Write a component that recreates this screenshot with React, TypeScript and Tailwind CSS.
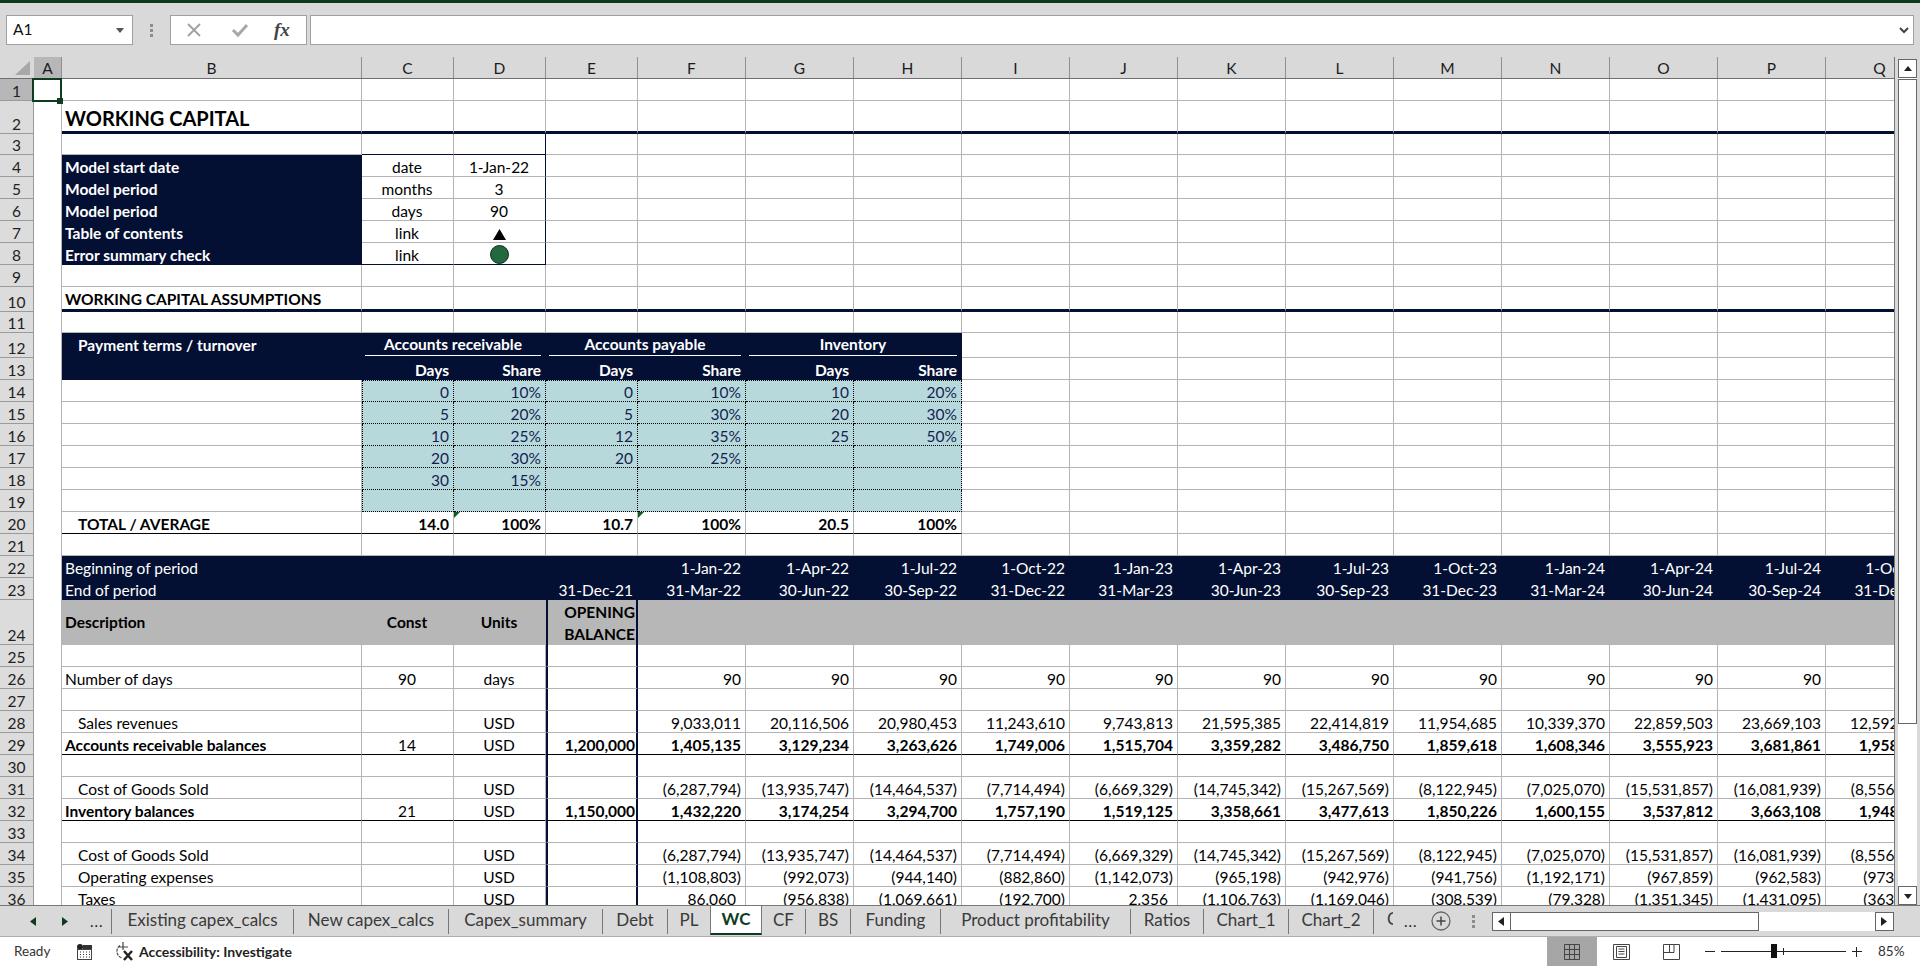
import clsx from "clsx";
import type { ReactNode } from "react";
import { twMerge } from "tailwind-merge";

type Spec = { t?: ReactNode; a?: "l" | "r" | "c"; b?: string; c?: string };
type Cells = Record<string, Spec | null>;

const COLS = "ABCDEFGHIJKLMNOPQ".split("");
const PERIOD_COLS = "FGHIJKLMNOPQ".split("");
const GRID_COLS = "grid grid-cols-[34px_28px_300px_92px_92px_92px_repeat(12,108px)]";

const GRID = "border-r border-b border-[#b4b4b4]";
const NO_LINE = "border-r border-b border-transparent";
const THICK = "border-r border-b-[3px] border-r-[#b4b4b4] border-b-[#031033]";
const BLACK = "border-r border-b border-r-[#b4b4b4] border-b-black";
const OPENING = "border-x-2 border-b border-x-[#031033] border-b-[#b4b4b4]";
const OPENING_BLACK = "border-x-2 border-b border-x-[#031033] border-b-black";
const INDENT = "pl-[16px]";

const NAVY = { b: NO_LINE, c: "bg-[#031033] text-white" };
const GREY = { b: NO_LINE, c: "bg-[#b7b7b7] font-bold items-center" };

const ALIGN = { l: "justify-start", r: "justify-end", c: "justify-center" };

function fill(cols: string, spec: Spec): Cells {
  return Object.fromEntries(cols.split("").map((col) => [col, spec]));
}

function periods(values: string[], c?: string): Cells {
  return Object.fromEntries(values.map((t, i) => [PERIOD_COLS[i], { t, a: "r" as const, c }]));
}

function Row({ n, h = "h-[22px]", cells = {}, active }: { n: number; h?: string; cells?: Cells; active?: boolean }) {
  return (
    <div className={clsx(GRID_COLS, h)}>
      <div
        className={clsx(
          "flex items-end justify-center border-r border-b border-[#9a9a9a] leading-[17px] text-[#222]",
          active ? "bg-[#b7b7b7]" : "bg-[#dcdcdc]",
        )}
      >
        {n}
      </div>
      {COLS.map((col) => {
        const spec = cells[col];
        if (spec === null) return null;
        return (
          <div
            key={col}
            className={twMerge(
              "relative flex items-end whitespace-nowrap pl-[3px] pr-[4px] leading-[17px] text-black",
              ALIGN[spec?.a ?? "l"],
              spec?.b ?? (col === "A" ? "border-r border-[#b4b4b4]" : GRID),
              spec?.c,
            )}
          >
            {spec?.t}
          </div>
        );
      })}
    </div>
  );
}

function Triangle() {
  return <span className="absolute top-0 left-0 h-[6px] w-[6px] bg-[#0f5a1e] [clip-path:polygon(0_0,100%_0,0_100%)]" />;
}

function GroupHead({ label }: { label: string }) {
  return <span className="mb-[1px] w-full border-b border-white pb-[2px] text-center font-bold">{label}</span>;
}

const info = (label: string, unit: string, value: ReactNode, last?: boolean): Cells => ({
  B: { ...NAVY, t: label, c: "bg-[#031033] text-white font-bold" },
  C: { t: unit, a: "c", b: last ? "border-r border-b border-r-[#b4b4b4] border-b-[#031033]" : GRID },
  D: {
    t: value,
    a: "c",
    b: last ? "border-r border-b border-[#031033]" : "border-r border-b border-r-[#031033] border-b-[#b4b4b4]",
  },
});

// dotted input block: the first row also draws the top edge, column C the left edge
const inputRow = (values: string[], first?: boolean): Cells =>
  Object.fromEntries(
    "CDEFGH".split("").map((col, i) => [
      col,
      {
        t: values[i],
        a: "r" as const,
        b: clsx("border-r border-b border-dotted border-black", first && "border-t", col === "C" && "border-l"),
        c: "bg-[#b8d9db] text-[#141f52]",
      },
    ]),
  );

const dateEnds = ["31-Mar-22", "30-Jun-22", "30-Sep-22", "31-Dec-22", "31-Mar-23", "30-Jun-23", "30-Sep-23", "31-Dec-23", "31-Mar-24", "30-Jun-24", "30-Sep-24", "31-Dec-24"];
const dateStarts = ["1-Jan-22", "1-Apr-22", "1-Jul-22", "1-Oct-22", "1-Jan-23", "1-Apr-23", "1-Jul-23", "1-Oct-23", "1-Jan-24", "1-Apr-24", "1-Jul-24", "1-Oct-24"];
const cogs = ["(6,287,794)", "(13,935,747)", "(14,464,537)", "(7,714,494)", "(6,669,329)", "(14,745,342)", "(15,267,569)", "(8,122,945)", "(7,025,070)", "(15,531,857)", "(16,081,939)", "(8,556,204)"];
const sales = ["9,033,011", "20,116,506", "20,980,453", "11,243,610", "9,743,813", "21,595,385", "22,414,819", "11,954,685", "10,339,370", "22,859,503", "23,669,103", "12,592,418"];
const receivables = ["1,405,135", "3,129,234", "3,263,626", "1,749,006", "1,515,704", "3,359,282", "3,486,750", "1,859,618", "1,608,346", "3,555,923", "3,681,861", "1,958,820"];
const inventory = ["1,432,220", "3,174,254", "3,294,700", "1,757,190", "1,519,125", "3,358,661", "3,477,613", "1,850,226", "1,600,155", "3,537,812", "3,663,108", "1,948,080"];
const opex = ["(1,108,803)", "(992,073)", "(944,140)", "(882,860)", "(1,142,073)", "(965,198)", "(942,976)", "(941,756)", "(1,192,171)", "(967,859)", "(962,583)", "(973,210)"];
const taxes = ["86,060", "(956,838)", "(1,069,661)", "(192,700)", "2,356", "(1,106,763)", "(1,169,046)", "(308,539)", "(79,328)", "(1,351,345)", "(1,431,095)", "(363,402)"];

const opening = (t?: string, line = OPENING): Spec => ({ t, a: "r", b: line, c: clsx("pr-[1px]", t && "font-bold") });
const blackRow = (cells: Cells): Cells => {
  const out: Cells = {};
  "BCDFGHIJKLMNOPQ".split("").forEach((col) => {
    out[col] = { ...cells[col], b: BLACK };
  });
  return out;
};

function Sheet() {
  return (
    <div className="w-[1895px] overflow-hidden border-r border-[#777] bg-white">
      <div className={clsx(GRID_COLS, "h-[22px] border-b border-[#6f6f6f] bg-[#d9d9d9]")}>
        <div className="flex items-end justify-end pr-[4px] pb-[3px]">
          <span className="h-[14px] w-[15px] bg-[#a8a8a8] [clip-path:polygon(100%_0,100%_100%,0_100%)]" />
        </div>
        {COLS.map((col) => (
          <div
            key={col}
            className={clsx(
              "flex items-end justify-center border-r border-[#909090] leading-[19px] text-[#1c1c1c]",
              col === "A" && "bg-[#b7b7b7]",
            )}
          >
            {col}
          </div>
        ))}
      </div>

      <Row
        n={1}
        active
        cells={{
          A: {
            t: (
              <span className="absolute -top-[1px] -right-[1px] -bottom-[1px] -left-[2px] z-10 border-2 border-[#0d3d1e]">
                <span className="absolute -right-[3px] -bottom-[4px] h-[6px] w-[6px] bg-[#0d3d1e]" />
              </span>
            ),
          },
        }}
      />
      <Row
        n={2}
        h="h-[33px]"
        cells={{
          ...fill("BCDEFGHIJKLMNOPQ", { b: THICK }),
          B: { t: "WORKING CAPITAL", b: THICK, c: "pb-[2px] text-[20px] font-bold leading-[22px]" },
        }}
      />
      <Row n={3} h="h-[21px]" cells={{ C: { b: "border-r border-b border-r-[#b4b4b4] border-b-[#031033]" }, D: { b: "border-r border-b border-[#031033]" } }} />
      <Row n={4} cells={info("Model start date", "date", "1-Jan-22")} />
      <Row n={5} cells={info("Model period", "months", "3")} />
      <Row n={6} cells={info("Model period", "days", "90")} />
      <Row
        n={7}
        cells={info(
          "Table of contents",
          "link",
          <svg width="13" height="11" viewBox="0 0 13 11" className="mb-[2px]">
            <polygon points="6.5,0 13,11 0,11" fill="#000" />
          </svg>,
        )}
      />
      <Row
        n={8}
        cells={info(
          "Error summary check",
          "link",
          <span className="h-[19px] w-[19px] rounded-full border border-[#0b2a18] bg-[#22693f]" />,
          true,
        )}
      />
      <Row n={9} />
      <Row
        n={10}
        h="h-[25px]"
        cells={{
          ...fill("BCDEFGHIJKLMNOPQ", { b: THICK }),
          B: { t: "WORKING CAPITAL ASSUMPTIONS", b: THICK, c: "pb-[1px] font-bold" },
        }}
      />
      <Row n={11} h="h-[21px]" />
      <Row
        n={12}
        h="h-[25px]"
        cells={{
          ...fill("BCDEFGH", NAVY),
          B: { ...NAVY, t: "Payment terms / turnover", c: "bg-[#031033] text-white font-bold pl-[16px] pb-[3px]" },
          C: { ...NAVY, t: <GroupHead label="Accounts receivable" />, c: "bg-[#031033] text-white col-span-2" },
          D: null,
          E: { ...NAVY, t: <GroupHead label="Accounts payable" />, c: "bg-[#031033] text-white col-span-2" },
          F: null,
          G: { ...NAVY, t: <GroupHead label="Inventory" />, c: "bg-[#031033] text-white col-span-2" },
          H: null,
        }}
      />
      <Row
        n={13}
        cells={{
          B: NAVY,
          ...Object.fromEntries(
            "CDEFGH".split("").map((col, i) => [
              col,
              { ...NAVY, t: i % 2 ? "Share" : "Days", a: "r" as const, c: "bg-[#031033] text-white font-bold" },
            ]),
          ),
        }}
      />
      <Row n={14} cells={inputRow(["0", "10%", "0", "10%", "10", "20%"], true)} />
      <Row n={15} cells={inputRow(["5", "20%", "5", "30%", "20", "30%"])} />
      <Row n={16} cells={inputRow(["10", "25%", "12", "35%", "25", "50%"])} />
      <Row n={17} cells={inputRow(["20", "30%", "20", "25%", "", ""])} />
      <Row n={18} cells={inputRow(["30", "15%", "", "", "", ""])} />
      <Row n={19} cells={inputRow(["", "", "", "", "", ""])} />
      <Row
        n={20}
        cells={{
          B: { t: "TOTAL / AVERAGE", b: BLACK, c: `font-bold ${INDENT}` },
          C: { t: "14.0", a: "r", b: BLACK, c: "font-bold" },
          D: { t: <><Triangle />100%</>, a: "r", b: BLACK, c: "font-bold" },
          E: { t: "10.7", a: "r", b: BLACK, c: "font-bold" },
          F: { t: <><Triangle />100%</>, a: "r", b: BLACK, c: "font-bold" },
          G: { t: "20.5", a: "r", b: BLACK, c: "font-bold" },
          H: { t: "100%", a: "r", b: BLACK, c: "font-bold" },
        }}
      />
      <Row n={21} />
      <Row
        n={22}
        cells={{
          ...fill("BCDE", NAVY),
          B: { ...NAVY, t: "Beginning of period" },
          ...Object.fromEntries(dateStarts.map((t, i) => [PERIOD_COLS[i], { ...NAVY, t, a: "r" as const }])),
        }}
      />
      <Row
        n={23}
        cells={{
          ...fill("BCD", NAVY),
          B: { ...NAVY, t: "End of period" },
          E: { ...NAVY, t: "31-Dec-21", a: "r" },
          ...Object.fromEntries(dateEnds.map((t, i) => [PERIOD_COLS[i], { ...NAVY, t, a: "r" as const }])),
        }}
      />
      <Row
        n={24}
        h="h-[45px]"
        cells={{
          ...fill("BCDFGHIJKLMNOPQ", GREY),
          B: { ...GREY, t: "Description" },
          C: { ...GREY, t: "Const", a: "c" },
          D: { ...GREY, t: "Units", a: "c" },
          E: {
            t: (
              <span className="text-right leading-[22px]">
                OPENING
                <br />
                BALANCE
              </span>
            ),
            a: "r",
            b: "border-x-2 border-x-[#031033]",
            c: "bg-[#b7b7b7] pr-[1px] font-bold",
          },
        }}
      />
      <Row n={25} cells={{ E: opening() }} />
      <Row
        n={26}
        cells={{
          B: { t: "Number of days" },
          C: { t: "90", a: "c" },
          D: { t: "days", a: "c" },
          E: opening(),
          ...periods(Array(12).fill("90")),
        }}
      />
      <Row n={27} cells={{ E: opening() }} />
      <Row n={28} cells={{ B: { t: "Sales revenues", c: INDENT }, D: { t: "USD", a: "c" }, E: opening(), ...periods(sales) }} />
      <Row
        n={29}
        cells={{
          ...blackRow({
            B: { t: "Accounts receivable balances", c: "font-bold" },
            C: { t: "14", a: "c" },
            D: { t: "USD", a: "c" },
            ...periods(receivables, "font-bold"),
          }),
          E: opening("1,200,000", OPENING_BLACK),
        }}
      />
      <Row n={30} cells={{ E: opening() }} />
      <Row n={31} cells={{ B: { t: "Cost of Goods Sold", c: INDENT }, D: { t: "USD", a: "c" }, E: opening(), ...periods(cogs) }} />
      <Row
        n={32}
        cells={{
          ...blackRow({
            B: { t: "Inventory balances", c: "font-bold" },
            C: { t: "21", a: "c" },
            D: { t: "USD", a: "c" },
            ...periods(inventory, "font-bold"),
          }),
          E: opening("1,150,000", OPENING_BLACK),
        }}
      />
      <Row n={33} cells={{ E: opening() }} />
      <Row n={34} cells={{ B: { t: "Cost of Goods Sold", c: INDENT }, D: { t: "USD", a: "c" }, E: opening(), ...periods(cogs) }} />
      <Row n={35} cells={{ B: { t: "Operating expenses", c: INDENT }, D: { t: "USD", a: "c" }, E: opening(), ...periods(opex) }} />
      <Row
        n={36}
        cells={{
          B: { t: "Taxes", c: INDENT },
          D: { t: "USD", a: "c" },
          E: opening(),
          ...Object.fromEntries(
            taxes.map((t, i) => [PERIOD_COLS[i], { t, a: "r" as const, c: t.startsWith("(") ? undefined : "pr-[9px]" }]),
          ),
        }}
      />
    </div>
  );
}

function ScrollArrow({ d, size = 8 }: { d: string; size?: number }) {
  return (
    <svg width={size} height={size} viewBox="0 0 8 8">
      <polygon points={d} fill="#222" />
    </svg>
  );
}

function VerticalScroll() {
  return (
    <div className="mt-[2px] ml-[3px] flex w-[19px] flex-col bg-white">
      <div className="flex h-[19px] items-center justify-center border border-[#666]">
        <ScrollArrow d="4,1 8,6 0,6" />
      </div>
      <div className="mt-[1px] h-[645px] border border-[#666] bg-white" />
      <div className="flex-1" />
      <div className="flex h-[19px] items-center justify-center border border-[#666]">
        <ScrollArrow d="0,2 8,2 4,7" />
      </div>
    </div>
  );
}

const TABS: [string, string][] = [
  ["Existing capex_calcs", "w-[182px]"],
  ["New capex_calcs", "w-[155px]"],
  ["Capex_summary", "w-[154px]"],
  ["Debt", "w-[65px]"],
];
const TABS_AFTER: [string, string][] = [
  ["CF", "w-[44px]"],
  ["BS", "w-[45px]"],
  ["Funding", "w-[90px]"],
  ["Product profitability", "w-[190px]"],
  ["Ratios", "w-[73px]"],
  ["Chart_1", "w-[85px]"],
  ["Chart_2", "w-[85px]"],
];

function Tab({ label, w }: { label: string; w: string }) {
  return (
    <div className={clsx("mt-[3px] flex h-[25px] items-center justify-center border-r border-[#777] pb-[4px] text-[#3a3a3a]", w)}>
      {label}
    </div>
  );
}

function Dots() {
  return (
    <div className="flex w-[4px] flex-col gap-[2px]">
      <span className="h-[3px] w-[3px] bg-[#8c8c8c]" />
      <span className="h-[3px] w-[3px] bg-[#8c8c8c]" />
      <span className="h-[3px] w-[3px] bg-[#8c8c8c]" />
    </div>
  );
}

function TabBar() {
  return (
    <div className="flex h-[32px] items-start border-t border-b border-t-[#777] border-b-[#aeaeae] bg-[#d9d9d9] text-[17px]">
      <div className="mt-[3px] flex h-[25px] w-[112px] items-center border-r border-[#777] pl-[30px]">
        <svg width="6" height="9" viewBox="0 0 6 9">
          <polygon points="6,0 6,9 0,4.5" fill="#0d3d1e" />
        </svg>
        <svg width="6" height="9" viewBox="0 0 6 9" className="ml-[26px]">
          <polygon points="0,0 6,4.5 0,9" fill="#0d3d1e" />
        </svg>
        <span className="ml-[22px] text-[15px] tracking-[1px] text-[#222]">...</span>
      </div>
      {TABS.map(([label, w]) => (
        <Tab key={label} label={label} w={w} />
      ))}
      <div className="mt-[3px] flex h-[25px] w-[42px] items-center justify-center pb-[4px] text-[#3a3a3a]">PL</div>
      <div className="flex h-[29px] w-[52px] items-center justify-center border-x border-b-2 border-x-[#777] border-b-[#0d3d1e] bg-white pb-[2px] font-bold text-[#0d3d1e]">
        WC
      </div>
      {TABS_AFTER.map(([label, w]) => (
        <Tab key={label} label={label} w={w} />
      ))}
      <div className="flex h-full items-center">
        <span className="ml-[13px] w-[6px] overflow-hidden pb-[4px] text-[#3a3a3a]">C</span>
        <span className="ml-[11px] text-[15px] tracking-[1px] text-[#222]">...</span>
        <svg width="20" height="20" viewBox="0 0 20 20" className="ml-[13px]">
          <circle cx="10" cy="10" r="9" fill="none" stroke="#666" strokeWidth="1.3" />
          <path d="M10 5.5v9M5.5 10h9" stroke="#444" strokeWidth="1.5" />
        </svg>
        <div className="ml-[21px]">
          <Dots />
        </div>
        <div className="ml-[16px] flex h-[19px] w-[402px] bg-white">
          <div className="flex w-[19px] items-center justify-center border border-[#666]">
            <svg width="6" height="9" viewBox="0 0 6 9">
              <polygon points="6,0 6,9 0,4.5" fill="#222" />
            </svg>
          </div>
          <div className="w-[248px] border border-l-0 border-[#666]" />
          <div className="flex-1" />
          <div className="flex w-[19px] items-center justify-center border border-[#666]">
            <svg width="6" height="9" viewBox="0 0 6 9">
              <polygon points="0,0 6,4.5 0,9" fill="#222" />
            </svg>
          </div>
        </div>
      </div>
    </div>
  );
}

function StatusBar() {
  return (
    <div className="flex h-[29px] items-center justify-between bg-white text-[13.5px] text-[#333]">
      <div className="flex items-center">
        <span className="ml-[14px] w-[63px]">Ready</span>
        <svg width="15" height="16" viewBox="0 0 15 16">
          <circle cx="3" cy="3" r="3" fill="#222" />
          <rect x="6" y="1" width="9" height="4" fill="#333" />
          <rect x="0.5" y="5.5" width="14" height="10" fill="none" stroke="#444" />
          <path d="M3 8h1M6 8h1M9 8h1M12 8h1M3 10.5h1M6 10.5h1M9 10.5h1M12 10.5h1M3 13h1M6 13h1M9 13h1M12 13h1" stroke="#333" />
        </svg>
        <svg width="20" height="19" viewBox="0 0 20 19" className="ml-[23px]">
          <path d="M5 3.5A7 7 0 0 0 7 16" fill="none" stroke="#444" strokeWidth="1.2" strokeDasharray="3 1" />
          <path d="M8 0v8M4 5h9" fill="none" stroke="#444" strokeWidth="1.2" />
          <path d="M9 9l8 9M17 9l-8 9" stroke="#222" strokeWidth="2.4" />
        </svg>
        <span className="ml-[4px] text-[14px] font-bold text-[#1f1f1f]">Accessibility: Investigate</span>
      </div>
      <div className="flex h-full w-[373px] items-center">
        <div className="flex h-full w-[50px] items-center justify-center bg-[#a6a6a6]">
          <svg width="16" height="16" viewBox="0 0 16 16">
            <path d="M.5.5h15v15H.5zM5.5.5v15M10.5.5v15M.5 5.5h15M.5 10.5h15" fill="none" stroke="#444" />
          </svg>
        </div>
        <svg width="17" height="16" viewBox="0 0 17 16" className="ml-[16px]">
          <path d="M.5.5h16v15H.5zM3.5 2.5h10v11h-10z" fill="none" stroke="#444" />
          <path d="M5.5 5h6M5.5 7.5h6M5.5 10h6" stroke="#444" />
        </svg>
        <svg width="17" height="16" viewBox="0 0 17 16" className="ml-[33px]">
          <path d="M.5.5h16v15H.5zM.5 8.5h10.5V.5M6.5.5v8" fill="none" stroke="#444" />
        </svg>
        <span className="ml-[25px] h-px w-[10px] bg-[#222]" />
        <div className="relative ml-[6px] h-px w-[125px] bg-[#222]">
          <span className="absolute -top-[7px] left-[50px] h-[14px] w-[6px] bg-[#111]" />
          <span className="absolute -top-[3px] left-[62px] h-[7px] w-px bg-[#222]" />
        </div>
        <span className="relative ml-[6px] h-[10px] w-[10px]">
          <span className="absolute top-[4px] left-0 h-px w-[10px] bg-[#222]" />
          <span className="absolute top-0 left-[4px] h-[10px] w-px bg-[#222]" />
        </span>
        <span className="ml-[16px]">85%</span>
      </div>
    </div>
  );
}

function FormulaBar() {
  return (
    <div className="flex h-[54px] shrink-0 items-start bg-[#d9d9d9] pt-[12px] text-[15.5px]">
      <div className="ml-[6px] flex h-[30px] w-[127px] items-center justify-between border border-[#a0a0a0] bg-white pr-[8px] pl-[6px] text-[#111]">
        A1
        <svg width="8" height="5" viewBox="0 0 8 5">
          <polygon points="0,0 8,0 4,5" fill="#555" />
        </svg>
      </div>
      <div className="ml-[17px] flex h-[30px] items-center">
        <Dots />
      </div>
      <div className="ml-[16px] flex h-[30px] w-[137px] items-center border border-[#a0a0a0] bg-white text-[#666]">
        <svg width="16" height="16" viewBox="0 0 16 16" className="ml-[15px]">
          <path d="M2 2l12 12M14 2L2 14" stroke="#a0a0a0" strokeWidth="1.8" />
        </svg>
        <svg width="18" height="16" viewBox="0 0 18 16" className="ml-[29px]">
          <path d="M2 8l5 5L16 3" fill="none" stroke="#a8a8a8" strokeWidth="3" />
        </svg>
        <span className="ml-[25px] [font-family:'Liberation_Serif',serif] text-[19px] font-bold italic text-[#444]">fx</span>
      </div>
      <div className="ml-[3px] flex h-[30px] flex-1 items-center justify-end border border-[#a0a0a0] bg-white pr-[4px] mr-[6px]">
        <svg width="10" height="7" viewBox="0 0 10 7">
          <path d="M1 1l4 4 4-4" fill="none" stroke="#444" strokeWidth="2" />
        </svg>
      </div>
    </div>
  );
}

export default function App() {
  return (
    <div className="flex h-[966px] w-[1920px] flex-col overflow-hidden bg-[#d9d9d9] [font-family:Lato,sans-serif] text-[15.5px]">
      <div className="h-[3px] shrink-0 bg-[#0c3a1b]" />
      <FormulaBar />
      <div className="flex h-[848px] shrink-0 overflow-hidden">
        <Sheet />
        <VerticalScroll />
      </div>
      <TabBar />
      <StatusBar />
    </div>
  );
}
